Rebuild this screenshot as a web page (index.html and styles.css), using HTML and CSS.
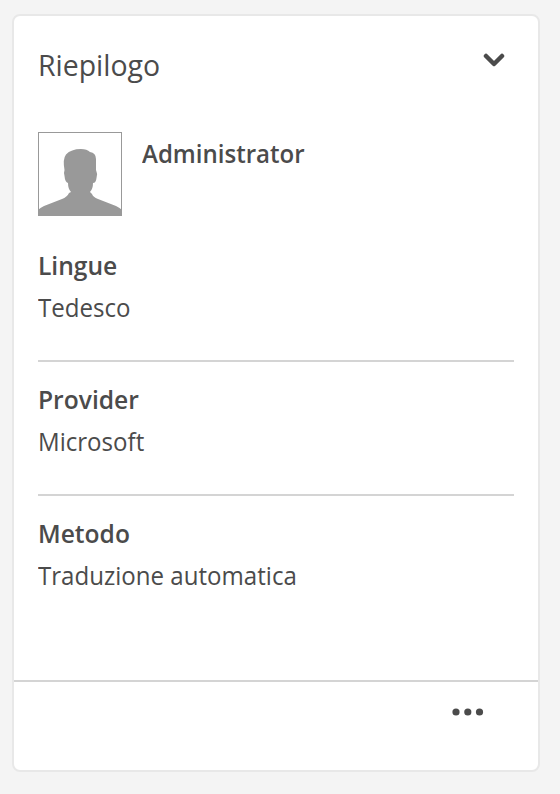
FILE: index.html
```
<!DOCTYPE html>
<html lang="it">
<head>
<meta charset="utf-8">
<title>Riepilogo</title>
<link rel="stylesheet" href="styles.css">
</head>
<body>
<article class="card">
  <header class="card-header">
    <h1 class="title"><span class="fit fit-title">Riepilogo</span></h1>
    <svg class="chevron" width="22" height="16" viewBox="0 0 22 16" aria-hidden="true"><path d="M3 3l8 8L19 3"/></svg>
  </header>
  <div class="card-body">
    <div class="user">
      <svg class="avatar" width="84" height="84" viewBox="0 0 84 84" aria-hidden="true">
        <rect class="frame" x=".5" y=".5" width="83" height="83"/>
        <path class="person" d="M0 84V78Q2 76 6 74L24 67Q29 65 31 61L33 60Q30 57 30 51Q27 50 26.500 44Q25.500 41 26.500 38Q24.500 27 28 22.500Q33 17 43 17Q49 17 52 20Q58 21 58 27V38Q60 42 58.500 46Q58 51 55 51Q55 57 52 60L54 62Q55 65 60 67L78 74Q82 76 84 78V84Z"/>
      </svg>
      <strong class="name"><span class="fit fit-name">Administrator</span></strong>
    </div>
    <dl class="details">
      <div class="row"><dt><span class="fit">Lingue</span></dt><dd><span class="fit">Tedesco</span></dd></div>
      <div class="row"><dt><span class="fit">Provider</span></dt><dd><span class="fit">Microsoft</span></dd></div>
      <div class="row"><dt><span class="fit">Metodo</span></dt><dd><span class="fit">Traduzione automatica</span></dd></div>
    </dl>
  </div>
  <footer class="card-footer">
    <svg class="more" width="32" height="8" viewBox="0 0 32 8" aria-hidden="true"><circle cx="4" cy="4" r="3.600"/><circle cx="15.800" cy="4" r="3.600"/><circle cx="27.500" cy="4" r="3.600"/></svg>
  </footer>
</article>
</body>
</html>
```
FILE: styles.css
```
* { box-sizing: border-box; }
body {
  margin: 0;
  padding: 14px 20px 22px 12px;
  height: 794px;
  background: #f4f4f4;
  color: #4b4b4b;
  font-family: "Open Sans", "Noto Sans", sans-serif;
}
.card {
  height: 758px;
  display: flex;
  flex-direction: column;
  border: 2px solid #e8e8e8;
  border-radius: 8px;
  background: #fff;
  overflow: hidden;
}
.card-header {
  display: flex;
  justify-content: space-between;
  padding: 29px 33px 0 24px;
  height: 116px;
}
.title {
  margin: 0;
  font-size: 29px;
  line-height: 40px;
  font-weight: 400;
}
.fit { display: inline-block; white-space: nowrap; transform-origin: 0 50%; }
.fit-title { transform: scaleX(.98); }
.chevron { margin-top: 8px; fill: none; stroke: #4b4b4b; stroke-width: 4.500; stroke-linecap: round; stroke-linejoin: round; }
.card-body { padding: 0 24px; flex: 1; }
.user { display: flex; gap: 20px; height: 84px; }
.avatar { flex: none; }
.frame { fill: #fff; stroke: #999; }
.person { fill: #999; }
.name { font-size: 26px; line-height: 42px; font-weight: 600; }
.fit-name { transform: scaleX(.925); }
.details { margin: 28px 0 0; }
.row { height: 118px; border-bottom: 2px solid #d4d4d4; margin-bottom: 16px; }
.row:last-child { border: 0; }
dt, dd { margin: 0; font-size: 26px; line-height: 42px; }
dt { font-weight: 600; }
dt .fit { transform: scaleX(.946); }
dd { font-weight: 400; }
dd .fit { transform: scaleX(.926); }
.card-footer {
  height: 90px;
  flex: none;
  display: flex;
  justify-content: flex-end;
  padding: 26px 54px 0 0;
  border-top: 2px solid #d4d4d4;
}
.more { fill: #4b4b4b; }
```
